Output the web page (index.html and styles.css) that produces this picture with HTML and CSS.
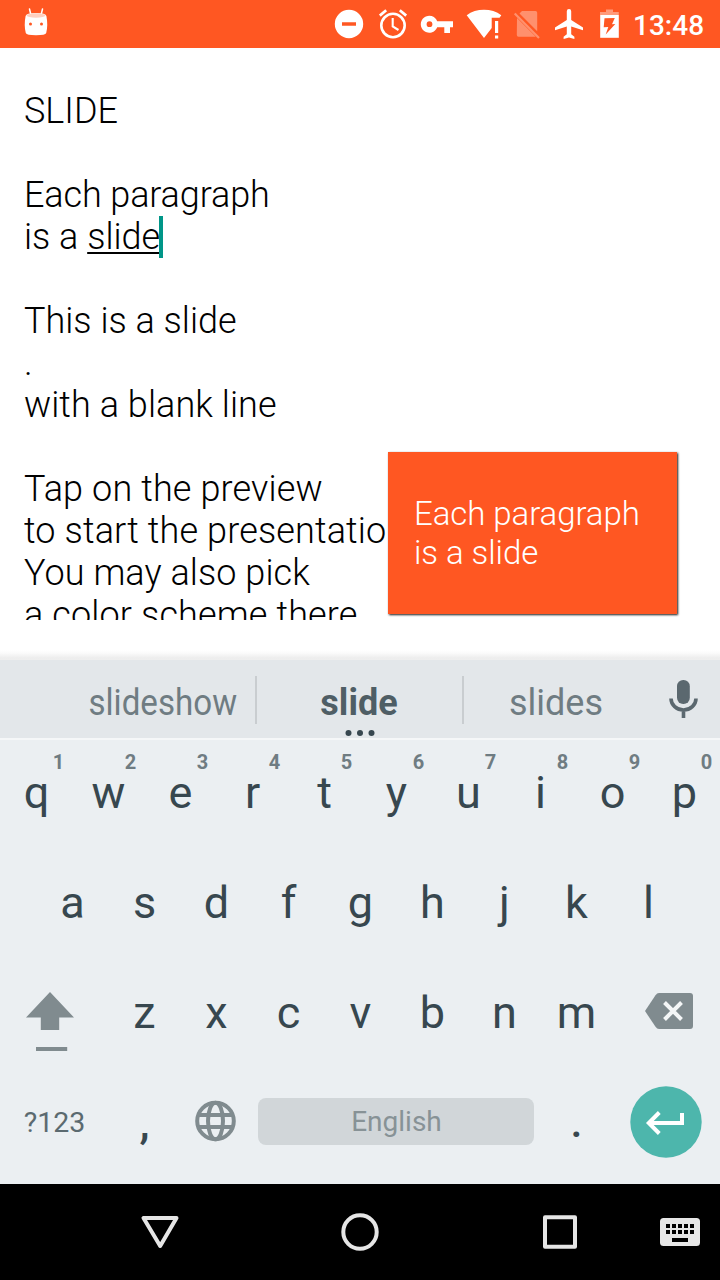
FILE: index.html
```html
<!DOCTYPE html>
<html lang="en">
<head>
<meta charset="utf-8">
<title>Slide</title>
<link rel="stylesheet" href="styles.css">
</head>
<body>
<div class="screen">
  <header class="status">
    <svg class="robot" width="24" height="30" viewBox="24 8 24 30">
      <path d="M29.500 9L30.700 14M42.500 9L41.300 14" stroke="#fff" stroke-width="1.500" stroke-linecap="round"/>
      <path d="M25.600 16C24.400 22 24.400 28 25.800 33Q26.500 35.200 36 35.200Q45.500 35.200 46.200 33C47.600 28 47.600 22 46.400 16Q46 13 36 13Q26 13 25.600 16Z" fill="#fff"/>
      <ellipse cx="36" cy="15.500" rx="9.500" ry="2.200" fill="#ffd0c0"/>
      <circle cx="30.500" cy="24" r="1.500" fill="#ff5722"/><circle cx="41.500" cy="24" r="1.500" fill="#ff5722"/>
    </svg>
    <div class="status-icons">
      <svg width="44" height="48" viewBox="327 0 44 48"><path fill="#fff" fill-rule="evenodd" d="M349 9.800a14.200 14.200 0 1 0 0 28.400a14.200 14.200 0 1 0 0-28.400zM342 22.300h14v3.400h-14z"/></svg>
      <svg width="44" height="48" viewBox="371 0 44 48" fill="none" stroke="#fff"><circle cx="393" cy="25.500" r="11.700" stroke-width="2.600"/><path d="M392.700 18V26.500L398.500 30" stroke-width="2.100"/><path d="M379.800 15.600L386.200 10.300M399.800 10.300L406.200 15.600" stroke-width="2.700"/></svg>
      <svg width="44" height="48" viewBox="415 0 44 48"><path fill="#fff" fill-rule="evenodd" d="M437.200 21.200A8.500 8.500 0 1 0 437.200 27.300H444.300V33H450V27.300H453V21.200ZM429.500 21.300a2.900 2.900 0 1 1 0 5.800a2.900 2.900 0 1 1 0-5.800z"/></svg>
      <svg width="44" height="48" viewBox="459 0 44 48" fill="#fff"><path d="M466.700 15.200C476 8 492 8 501.300 15.200L499.500 17.700H491.700V28L484 38Z"/><path d="M495 21h3.200v12h-3.200zM495 35.500h3.200v3h-3.200z"/></svg>
      <svg width="44" height="48" viewBox="503 0 44 48"><g opacity=".34"><path fill="#fff" d="M522 11H535.500Q537.200 11 537.200 12.700V31.300L519.500 13.500ZM517 18L535.800 36.800H518.500Q516.800 36.800 516.800 35Z"/><path d="M514.700 13.500L539 38" stroke="#fff" stroke-width="2.200"/></g></svg>
      <svg width="44" height="48" viewBox="547 0 44 48"><path fill="#fff" d="M583 30.200V27.400L571.200 20V11.300A2.200 2.200 0 0 0 566.800 11.300V20L555 27.400V30.200L566.800 26.600V34.300L563.600 36.700V39L569 37.400L574.400 39V36.700L571.200 34.300V26.600Z"/></svg>
      <svg width="38" height="48" viewBox="591 0 38 48"><path fill="#ff9a7a" d="M606 9.500h7v2.500h5.800v3h-18.800v-3h6z"/><path fill="#fff" d="M600.200 15h18.600v22.800h-18.600z"/><path fill="#ff5722" d="M604.500 18.300L614.800 18L612 24.300L615.300 24L605.700 34.500L608.300 27L603.700 27.300Z"/></svg>
    </div>
    <time class="clock">13:48</time>
  </header>

  <main class="editor">
    <div class="text">
      <p>SLIDE</p>
      <p class="gap tight">Each paragraph</p>
      <p>is a <span class="composing">slide</span><span class="caret"></span></p>
      <p class="gap">This is a slide</p>
      <p>.</p>
      <p class="loose">with a blank line</p>
      <p class="gap looser">Tap on the preview</p>
      <p class="looser">to start the presentation</p>
      <p class="loose">You may also pick</p>
      <p class="looser">a color scheme there</p>
    </div>
    <div class="preview">Each paragraph<br>is a slide</div>
  </main>

  <section class="keyboard">
    <div class="suggestions">
      <div class="suggestion first"><span>slideshow</span></div>
      <div class="suggestion chosen">slide<svg class="more" width="30" height="8" viewBox="0 0 30 8" fill="#37474f"><circle cx="3.500" cy="4" r="3"/><circle cx="15" cy="4" r="3"/><circle cx="26.500" cy="4" r="3"/></svg></div>
      <div class="suggestion">slides</div>
      <svg class="mic" width="72" height="78" viewBox="648 660 72 78"><rect x="677" y="680" width="12.800" height="24" rx="6.200" fill="#5b686f"/><path d="M671 698.500A12.500 11.500 0 0 0 696 698.500M683.500 710V718" fill="none" stroke="#5b686f" stroke-width="3.600"/></svg>
    </div>
    <div class="row top">
      <kbd>q<sup>1</sup></kbd><kbd>w<sup>2</sup></kbd><kbd>e<sup>3</sup></kbd><kbd>r<sup>4</sup></kbd><kbd>t<sup>5</sup></kbd><kbd>y<sup>6</sup></kbd><kbd>u<sup>7</sup></kbd><kbd>i<sup>8</sup></kbd><kbd>o<sup>9</sup></kbd><kbd>p<sup>0</sup></kbd>
    </div>
    <div class="row home">
      <kbd>a</kbd><kbd>s</kbd><kbd>d</kbd><kbd>f</kbd><kbd>g</kbd><kbd>h</kbd><kbd>j</kbd><kbd>k</kbd><kbd>l</kbd>
    </div>
    <div class="row">
      <svg class="wide" height="110" viewBox="0 960 108 110" fill="#808b8f"><path d="M50 992L74 1017.500H59.200V1030H40.800V1017.500H26ZM36 1047h31.200v4H36z"/></svg>
      <kbd>z</kbd><kbd>x</kbd><kbd>c</kbd><kbd>v</kbd><kbd>b</kbd><kbd>n</kbd><kbd>m</kbd>
      <svg class="wide" height="110" viewBox="612 960 108 110"><path fill="#808b8f" d="M659 993H690Q693 993 693 996V1026Q693 1029 690 1029H659Q657 1029 655.500 1026.800L645 1011L655.500 995.200Q657 993 659 993Z"/><path d="M664.500 1002.500L681.500 1019.500M681.500 1002.500L664.500 1019.500" stroke="#f4f6f7" stroke-width="4"/></svg>
    </div>
    <div class="row bottom">
      <kbd class="wide symbols">?123</kbd>
      <kbd class="comma">,</kbd>
      <svg width="72" height="110" viewBox="180 1070 72 110" fill="none" stroke="#808b8f" stroke-width="4"><circle cx="215.500" cy="1121" r="18.300"/><ellipse cx="215.500" cy="1121" rx="7.500" ry="18.300"/><path d="M199 1115h33M199 1127h33"/></svg>
      <kbd class="space">English</kbd>
      <kbd class="period">.</kbd>
      <svg class="wide" height="110" viewBox="612 1070 108 110"><circle cx="666" cy="1122" r="35.700" fill="#4db6ac"/><path d="M682 1113V1123H649M659.300 1112.500L648.800 1123L659.300 1133.500" fill="none" stroke="#fff" stroke-width="4"/></svg>
    </div>
  </section>

  <nav class="navbar">
    <svg width="720" height="96" viewBox="0 1184 720 96" fill="none" stroke="#e6e6e6" stroke-width="4" stroke-linejoin="round">
      <path d="M143.500 1218H176.500L160.200 1246Z"/>
      <circle cx="360" cy="1232" r="16.700"/>
      <rect x="545" y="1217.300" width="30" height="29.500"/>
      <rect x="660" y="1218" width="40" height="28" rx="3.500" fill="#e6e6e6" stroke="none"/>
      <path d="M666 1226h28M666 1232h28" stroke="#000" stroke-dasharray="4 2"/>
      <path d="M672 1240h16" stroke="#000"/>
    </svg>
  </nav>
</div>
</body>
</html>
```
FILE: styles.css
```css
* { box-sizing: border-box; }
body { margin: 0; font-family: Roboto, "Noto Sans", sans-serif; }
svg { display: block; flex: none; }
.screen { width: 720px; height: 1280px; display: flex; flex-direction: column; background: #fff; overflow: hidden; }

.status { height: 48px; flex: none; display: flex; align-items: center; background: #ff5722; color: #fff; }
.robot { margin-left: 24px; margin-top: -2px; }
.status-icons { display: flex; margin-left: 279px; }
.clock { margin-left: 4px; padding-top: 2px; font-size: 28px; font-weight: 500; white-space: nowrap; }

.editor { position: relative; height: 612px; flex: none; padding: 42px 24px 40px; background: linear-gradient(#fff 602px, #fbfbfb 605px, #ededed 610px, #eee); }
.text { height: 530px; overflow: hidden; white-space: nowrap; font-size: 36px; font-weight: 300; line-height: 42px; color: #000; }
.text p { height: 42px; margin: 0; padding-top: 0; }
.text .gap { margin-top: 42px; }
.tight { letter-spacing: -.12px; }
.loose { letter-spacing: .06px; }
.looser { letter-spacing: .13px; }
.composing { text-decoration: underline; text-decoration-thickness: 2px; text-underline-offset: 3px; text-decoration-skip-ink: none; }
.caret { display: inline-block; width: 4px; height: 42px; margin-left: -1px; background: #009688; vertical-align: top; }
.preview { position: absolute; left: 388px; top: 404px; width: 288.500px; height: 162px; padding: 42px 26px; background: #ff5722; color: #fff; font-size: 33px; font-weight: 300; letter-spacing: -.07px; line-height: 39px; white-space: nowrap; box-shadow: 1px 1px 2px rgba(0, 0, 0, .9); }

.keyboard { height: 524px; flex: none; background: #ebeff2; color: #37474f; }
.suggestions { height: 80px; display: flex; background: #e3e7ea; border-bottom: 2px solid #f5f7f8; font-size: 36px; line-height: 86px; color: #6f7c82; }
.suggestion { position: relative; width: 207px; padding-left: 1px; text-align: center; }
.suggestion.first { width: 255px; padding-left: 70px; }
.suggestion.first span { display: inline-block; transform: scaleX(.92); }
.suggestion + .suggestion::before { content: ""; position: absolute; left: 0; top: 16px; width: 2px; height: 48px; background: #c9cdd0; }
.suggestion.chosen { font-weight: 700; color: #4f5e65; }
.suggestion:nth-child(3) { width: 186px; padding-left: 2px; }
.more { position: absolute; left: 89.500px; bottom: 1.500px; }

.row { height: 110px; display: flex; }
.home { padding: 0 36px; }
kbd { position: relative; width: 72px; flex: none; padding-left: 1px; text-align: center; font-family: inherit; font-size: 45px; line-height: 105px; }
.wide { width: 108px; }
sup { position: absolute; left: 47.500px; top: 10px; width: 22px; text-align: center; font-size: 20px; font-weight: 700; line-height: 24px; color: #6f7c82; }
.symbols { font-size: 28.500px; line-height: 105px; color: #5b6a70; }
.comma { font-weight: 500; }
.period { font-weight: 500; font-size: 43px; }
.space { width: 276px; height: 47px; margin: 28px 6px 0; border-radius: 8px; background: #d1d6d9; color: #879296; font-size: 28px; line-height: 48px; }

.navbar { height: 96px; flex: none; background: #000; }
```
